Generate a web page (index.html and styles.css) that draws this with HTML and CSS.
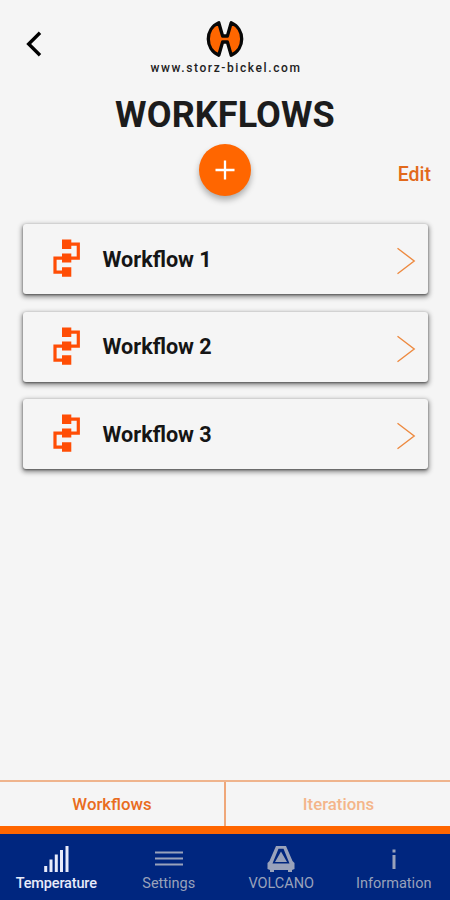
FILE: index.html
```html
<!DOCTYPE html>
<html lang="en">
<head>
<meta charset="utf-8">
<title>Workflows</title>
<link rel="stylesheet" href="styles.css">
</head>
<body>
<svg width="0" height="0" class="defs">
  <symbol id="flow" viewBox="0 0 28 38">
    <path d="M14 5.2H25.3V19.2H14H2V33.2H14" fill="none" stroke="#ff4d05" stroke-width="3.2"/>
    <path d="M9 .4h9.3v9.6H9zM9 14.4h9.3v9.2H9zM9 28.2h9.3v9.6H9z" fill="#ff4d05"/>
  </symbol>
  <symbol id="chevron" viewBox="0 0 20 30">
    <path d="M1.5 2.2L18.2 15L1.5 27.8" fill="none" stroke="#ed8a40" stroke-width="1.4"/>
  </symbol>
</svg>
<div class="app">
  <header class="header">
    <svg class="back" width="16" height="26" viewBox="0 0 16 26"><path d="M14 1.8L2.7 13L14 24.2" fill="none" stroke="#000" stroke-width="3.4"/></svg>
    <div class="brand">
      <svg width="40" height="38" viewBox="0 0 40 38"><path d="M13.8 2.8C-.2 9-.2 29 13.8 35.2L17.6 22H22.4L26.2 35.2C40.2 29 40.2 9 26.2 2.8L22.4 16H17.6Z" fill="#ff6600" stroke="#080808" stroke-width="3.3" stroke-linejoin="round"/></svg>
      <span class="site">www.storz-bickel.com</span>
    </div>
  </header>
  <h1 class="title">WORKFLOWS</h1>
  <div class="actions">
    <button class="add" aria-label="Add"><svg width="20" height="20" viewBox="0 0 20 20"><path d="M10 .5V19.5M.5 10H19.5" stroke="#fff" stroke-width="2.3"/></svg></button>
    <span class="edit">Edit</span>
  </div>
  <main class="list">
    <div class="card"><svg class="flow"><use href="#flow"/></svg><span class="name">Workflow 1</span><svg class="chevron"><use href="#chevron"/></svg></div>
    <div class="card"><svg class="flow"><use href="#flow"/></svg><span class="name">Workflow 2</span><svg class="chevron"><use href="#chevron"/></svg></div>
    <div class="card"><svg class="flow"><use href="#flow"/></svg><span class="name">Workflow 3</span><svg class="chevron"><use href="#chevron"/></svg></div>
  </main>
  <div class="tabs">
    <div class="tab selected">Workflows</div>
    <div class="tab">Iterations</div>
  </div>
  <nav class="nav">
    <div class="item active">
      <svg width="28" height="28" viewBox="0 0 28 28"><path d="M3.7 27V21M9 27V14.500M14.300 27V9.500M19.500 27V5M25 27V1" stroke="currentColor" stroke-width="3"/></svg>
      <span>Temperature</span>
    </div>
    <div class="item">
      <svg width="28" height="28" viewBox="0 0 28 28"><path d="M0 7.500H28M0 13.500H28M0 19.500H28" stroke="currentColor" stroke-width="2"/></svg>
      <span>Settings</span>
    </div>
    <div class="item">
      <svg width="28" height="28" viewBox="0 0 28 28"><path fill="currentColor" fill-rule="evenodd" d="M9 1H19L25.500 16L27.500 18V24L25 25V27H21V25H7V27H3V25L.5 24V18L2.500 16ZM11.500 3.800L5.500 18.500H22.500L16.500 3.800ZM14 6.500L20 17H8Z"/></svg>
      <span>VOLCANO</span>
    </div>
    <div class="item">
      <svg width="28" height="28" viewBox="0 0 28 28"><path d="M14 4.500V7.500M14 10V24" stroke="currentColor" stroke-width="3"/></svg>
      <span>Information</span>
    </div>
  </nav>
</div>
</body>
</html>
```
FILE: styles.css
```css
* { box-sizing: border-box; }
body { margin: 0; background: #f5f5f5; font-family: Roboto, "Liberation Sans", sans-serif; }
.defs { display: block; }
.app { width: 450px; height: 900px; display: flex; flex-direction: column; overflow: hidden; }
.header { height: 92px; display: grid; grid-template-columns: 75px 1fr 75px; align-items: start; }
.back { margin: 31px 0 0 26px; }
.brand { display: flex; flex-direction: column; align-items: center; padding-top: 20px; }
.site { font-size: 12px; line-height: 16px; margin-top: 2px; letter-spacing: 1.6px; margin-right: -2px; font-weight: 500; color: #222; white-space: nowrap; }
.title { margin: 0; height: 46px; line-height: 46px; text-align: center; font-size: 36px; font-weight: 700; color: #1c1c1c; letter-spacing: .1px; }
.actions { height: 86px; display: grid; grid-template-columns: 1fr 52px 1fr; align-items: start; padding-top: 6px; }
.add { grid-column: 2; width: 52px; height: 52px; border: 0; border-radius: 50%; padding: 0; background: #ff6600; display: flex; align-items: center; justify-content: center; box-shadow: 0 4px 6px rgba(0,0,0,.3); }
.edit { justify-self: end; margin: 19px 19px 0 0; font-size: 19.5px; line-height: 24px; font-weight: 500; color: #e2691b; }
.list { flex: 1; display: flex; flex-direction: column; gap: 17.5px; padding: 0 22.5px 0 23px; }
.card { height: 70px; flex: none; display: flex; align-items: center; padding: 0 12px 0 30px; border-radius: 3px; background: #f5f5f5; box-shadow: 0 2px 5px 1px rgba(0,0,0,.45), 0 1px 2px rgba(0,0,0,.4); }
.flow { width: 28px; height: 38px; flex: none; margin-top: -2px; }
.name { flex: 1; margin: 1px 0 0 21.5px; font-size: 21.6px; line-height: 28px; font-weight: 700; color: #151515; }
.chevron { width: 20px; height: 30px; flex: none; margin-top: 4px; }
.tabs { height: 46px; display: flex; border-top: 2px solid #efb48d; }
.tab { flex: 1; text-align: center; font-size: 16.8px; line-height: 45px; font-weight: 500; color: #f4b58a; padding-left: 1px; }
.tab.selected { flex: 0 0 226px; padding-left: 0; color: #e96c20; border-right: 2px solid #efa779; }
.nav { height: 74px; display: flex; border-top: 8px solid #ff6600; background: #00267f; }
.item { flex: 1; display: flex; flex-direction: column; align-items: center; padding: 11px 0 0; color: #99a2bb; font-size: 14.5px; line-height: 18px; }
.item span { margin-top: 2px; }
.item.active { color: #e8ebfa; font-weight: 500; }
.item.active span { letter-spacing: -.15px; }
```
